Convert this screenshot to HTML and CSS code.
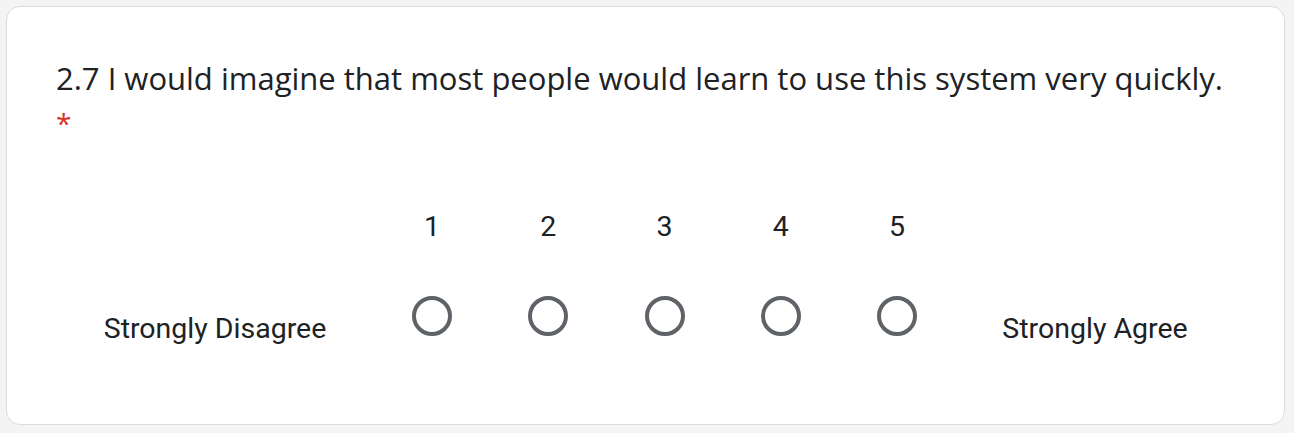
FILE: index.html
```html
<!DOCTYPE html>
<html lang="en">
<head>
<meta charset="utf-8">
<title>Question 2.7</title>
<link rel="stylesheet" href="styles.css">
</head>
<body>
<div class="card">
  <div class="title">2.7 I would imagine that most people would learn to use this system very quickly.</div>
  <div class="required">*</div>
  <div class="scale">
    <div class="label label-left">Strongly Disagree</div>
    <div class="col"><div class="num">1</div><div class="radio"></div></div>
    <div class="col"><div class="num">2</div><div class="radio"></div></div>
    <div class="col"><div class="num">3</div><div class="radio"></div></div>
    <div class="col"><div class="num">4</div><div class="radio"></div></div>
    <div class="col"><div class="num">5</div><div class="radio"></div></div>
    <div class="label label-right">Strongly Agree</div>
  </div>
</div>
</body>
</html>
```
FILE: styles.css
```css
html, body {
  margin: 0;
  padding: 0;
  background: #f4f4f5;
}
body {
  padding: 6px 9px 8px 6px;
}
.card {
  background: #fff;
  border: 1.5px solid #dadce0;
  border-radius: 14px;
  height: 419px;
  box-sizing: border-box;
  padding: 50px 49px 0 49px;
  font-family: "Open Sans", sans-serif;
  color: #202124;
}
.title {
  font-size: 31px;
  line-height: 42px;
  white-space: nowrap;
}
.required {
  color: #d93025;
  font-size: 28px;
  line-height: 28px;
  height: 28px;
  margin-top: 10px;
}
.scale {
  display: flex;
  align-items: stretch;
  margin-top: 76px;
  font-family: Roboto, sans-serif;
  font-size: 28.5px;
  color: #202124;
}
.label {
  display: flex;
  align-items: flex-start;
  justify-content: center;
  padding-top: 99px;
}
.label-left { width: 318px; }
.label-right { width: 280px; }
.col {
  flex: 1;
  display: flex;
  flex-direction: column;
  align-items: center;
}
.num {
  line-height: 28px;
  height: 28px;
}
.radio {
  margin-top: 55px;
  width: 40px;
  height: 40px;
  box-sizing: border-box;
  border: 4px solid #5f6368;
  border-radius: 50%;
}
```
